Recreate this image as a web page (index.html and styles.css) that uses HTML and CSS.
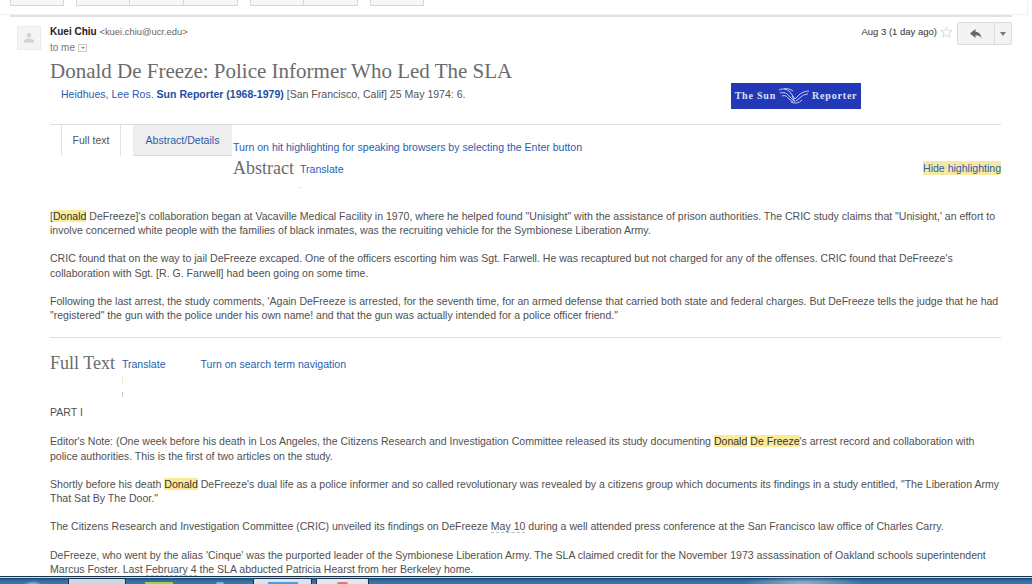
FILE: index.html
```html
<!DOCTYPE html>
<html lang="en">
<head>
<meta charset="utf-8">
<title>Donald De Freeze: Police Informer Who Led The SLA</title>
<link rel="stylesheet" href="styles.css">
</head>
<body>
<div class="screen">
  <div class="topband">
    <div class="toolbar">
      <div class="tb-group"><span class="tb-btn"></span></div>
      <div class="tb-group"><span class="tb-btn"></span><span class="tb-btn"></span><span class="tb-btn"></span></div>
      <div class="tb-group"><span class="tb-btn"></span><span class="tb-btn"></span></div>
      <div class="tb-group"><span class="tb-btn"></span></div>
    </div>
  </div>
  <div class="toprule"></div>

  <header class="mail-head">
    <div class="avatar">
      <svg viewBox="0 0 24 24" width="22" height="22"><circle cx="12" cy="9" r="2.500" fill="#d2d2d2"/><path d="M6.500 17v-1.500c0-2 3-3 5.500-3s5.500 1 5.500 3V17z" fill="#d2d2d2"/></svg>
    </div>
    <div class="sender">
      <div><b class="sender-name">Kuei Chiu</b> <span class="sender-mail">&lt;kuei.chiu@ucr.edu&gt;</span></div>
      <div class="to-me">to me <span class="to-caret"><span class="to-tri"></span></span></div>
    </div>
    <div class="mail-meta">
      <span class="mail-date">Aug 3 (1 day ago)</span>
      <svg class="star" viewBox="0 0 14 14" width="13" height="13"><path d="M7 1l1.800 4h4.200l-3.400 2.800 1.200 4.400L7 9.800l-3.800 2.400 1.200-4.400L1 5h4.200z" fill="none" stroke="#d8d8d8"/></svg>
      <div class="reply-btn">
        <span class="reply-main"><svg viewBox="0 0 12 10" width="12" height="10"><path d="M5.500 0L0 4.500 5.500 9V6.300c2.500 0 4.500.6 6 3C11 5.500 9 3 5.500 2.800z" fill="#666"/></svg></span>
        <span class="reply-more"><span class="caret"></span></span>
      </div>
    </div>
  </header>

  <main class="doc">
    <h1 class="doc-title">Donald De Freeze: Police Informer Who Led The SLA</h1>
    <div class="cite-row">
      <p class="cite"><a>Heidhues, Lee Ros.</a> <a class="bold">Sun Reporter (1968-1979)</a> [San Francisco, Calif] 25 May 1974: 6.</p>
      <div class="logo">
        <span>The Sun</span>
        <svg viewBox="0 0 32 18" width="32" height="18"><g fill="none" stroke="#d8def5" stroke-width=".9"><path d="M1 3c4-2 8-1 11 2l5 7"/><path d="M2 6c4-1 7 0 9 3l5 5"/><path d="M4 9c3-1 5 0 7 3l4 3"/><path d="M6 2c3-1 6 0 9 2"/><path d="M17 12l5-5c3-2 6-3 9-3"/><path d="M18 14l5-4c2-2 5-3 7-3"/><path d="M13 15c4 2 8 1 11-2"/><path d="M14 9l3 6"/></g></svg>
        <span>Reporter</span>
      </div>
    </div>

    <div class="tabs-area">
      <nav class="tabs">
        <span class="tab tab-active">Full text</span>
        <span class="tab tab-other">Abstract/Details</span>
      </nav>
      <div class="tab-side">
        <a class="hit-link">Turn on hit highlighting for speaking browsers by selecting the Enter button</a>
        <div class="abstract-row">
          <h2 class="sec-title">Abstract</h2>
          <a class="translate">Translate<span class="speck speck-a"></span></a>
          <a class="hide-hl">Hide highlighting</a>
        </div>
      </div>
    </div>

    <section class="abstract">
      <p>[<mark>Donald</mark> DeFreeze]'s collaboration began at Vacaville Medical Facility in 1970, where he helped found "Unisight" with the assistance of prison authorities. The CRIC study claims that "Unisight,' an effort to involve concerned white people with the families of black inmates, was the recruiting vehicle for the Symbionese Liberation Army.</p>
      <p>CRIC found that on the way to jail DeFreeze excaped. One of the officers escorting him was Sgt. Farwell. He was recaptured but not charged for any of the offenses. CRIC found that DeFreeze's collaboration with Sgt. [R. G. Farwell] had been going on some time.</p>
      <p>Following the last arrest, the study comments, 'Again DeFreeze is arrested, for the seventh time, for an armed defense that carried both state and federal charges. But DeFreeze tells the judge that he had "registered" the gun with the police under his own name! and that the gun was actually intended for a police officer friend."</p>
    </section>

    <div class="fulltext-head">
      <h2 class="sec-title">Full Text</h2>
      <a class="translate">Translate<span class="speck speck-b"></span><span class="speck speck-c"></span></a>
      <a class="nav-link">Turn on search term navigation</a>
    </div>

    <section class="fulltext">
      <p class="part">PART I</p>
      <p>Editor's Note: (One week before his death in Los Angeles, the Citizens Research and Investigation Committee released its study documenting <mark>Donald</mark> <mark>De Freeze</mark>'s arrest record and collaboration with police authorities. This is the first of two articles on the study.</p>
      <p>Shortly before his death <mark>Donald</mark> DeFreeze's dual life as a police informer and so called revolutionary was revealed by a citizens group which documents its findings in a study entitled, "The Liberation Army That Sat By The Door."</p>
      <p>The Citizens Research and Investigation Committee (CRIC) unveiled its findings on DeFreeze <span class="dashed">May 10</span> during a well attended press conference at the San Francisco law office of Charles Carry.</p>
      <p>DeFreeze, who went by the alias 'Cinque' was the purported leader of the Symbionese Liberation Army. The SLA claimed credit for the November 1973 assassination of Oakland schools superintendent Marcus Foster. Last <span class="dashed">February 4</span> the SLA abducted Patricia Hearst from her Berkeley home.</p>
    </section>
  </main>

  <footer class="taskbar">
    <span class="task-orb"></span>
    <span class="task-btn"></span>
    <span class="task-icon task-green"></span>
    <span class="task-icon task-blue"></span>
    <span class="task-btn task-btn-b"><span class="task-inner"></span></span>
    <span class="task-btn task-btn-c"><span class="task-red"></span></span>
  </footer>
</div>
</body>
</html>
```
FILE: styles.css
```css
* { box-sizing: border-box; }
html, body { margin: 0; padding: 0; }
body { background: #fff; font-family: "Liberation Sans", Arial, sans-serif; font-size: 10.550px; color: #505050; }
a { color: #2a5db0; }
p { margin: 0; }
.screen { width: 1032px; height: 584px; overflow: hidden; display: flex; flex-direction: column; position: relative; }

.topband { flex: none; height: 15px; width: 1028px; border-bottom: 1px solid #f0f0f0; border-right: 1px solid #f0f0f0; padding-left: 10px; }
.toolbar { display: flex; gap: 12px; align-items: flex-start; }
.tb-group { display: flex; }
.tb-btn { width: 54px; height: 6px; background: #f6f6f6; border: 1px solid #d8d8d8; border-top: 0; }
.tb-btn + .tb-btn { border-left: 0; }
.toprule { flex: none; height: 2px; width: 1002px; margin-left: 10px; background: #e2e2e2; }

.mail-head { flex: none; height: 33px; margin-top: 9px; padding-left: 17px; display: flex; }
.avatar { width: 24px; height: 24px; background: #f4f4f4; border: 1px solid #ebebeb; }
.avatar svg { display: block; }
.sender { margin-left: 9px; font-size: 10px; line-height: 15px; color: #777; margin-top: -2px; }
.sender-name { color: #222; }
.sender-mail { font-size: 9.400px; color: #666; }
.to-me { color: #777; font-size: 10px; margin-top: 1px; display: flex; align-items: center; gap: 3px; }
.to-caret { width: 9px; height: 8px; border: 1px solid #ccc; display: flex; align-items: center; justify-content: center; }
.to-tri { width: 0; height: 0; border: 2px solid transparent; border-top: 2px solid #888; border-bottom: 0; }
.mail-meta { margin-left: auto; margin-right: 20px; display: flex; align-items: flex-start; }
.mail-date { font-size: 9.500px; color: #333; line-height: 12px; }
.star { margin: 0 3px 0 3px; }
.reply-btn { display: flex; width: 55px; height: 23px; margin-left: 1px; background: #f3f3f3; border: 1px solid #dcdcdc; border-radius: 2px; margin-top: -4px; }
.reply-main { width: 37px; border-right: 1px solid #dcdcdc; display: flex; align-items: center; justify-content: center; }
.reply-more { flex: 1; display: flex; align-items: center; justify-content: center; }
.caret { width: 0; height: 0; border: 3px solid transparent; border-top: 4px solid #777; border-bottom: 0; }

.doc { flex: 1; padding-left: 50px; width: 1001px; display: flex; flex-direction: column; }
.doc-title { margin: 0; font: 400 21px/24px "Liberation Serif", "Times New Roman", serif; color: #6b6b6b; }
.cite-row { display: flex; height: 34px; }
.cite { margin-left: 11px; line-height: 14px; margin-top: 4px; color: #555; width: 670px; }
.cite a { color: #2a5db0; }
.cite .bold { font-weight: 700; color: #1c4fa0; }
.logo { width: 130px; height: 26px; background: #2338b6; color: #dbe1f6; font: 700 10px/26px "Liberation Serif", serif; display: flex; align-items: center; justify-content: center; gap: 2px; letter-spacing: .8px; white-space: nowrap; }

.tabs-area { border-top: 1px solid #dedede; display: flex; margin-top: 7px; height: 77px; }
.tabs { display: flex; height: 31px; flex: none; padding-left: 11px; }
.tab { display: block; line-height: 30px; height: 31px; color: #555; }
.tab-active { width: 60px; text-align: center; border-left: 1px solid #e2e2e2; border-right: 1px solid #e2e2e2; }
.tab-other { width: 99px; margin-left: 12px; background: #eeeeee; border-bottom: 1px solid #dedede; color: #2a5db0; text-align: center; }
.tab-side { flex: 1; margin-left: 1px; padding-top: 15px; display: flex; flex-direction: column; }
.hit-link { line-height: 14px; }
.abstract-row { display: flex; align-items: flex-start; margin-top: 4px; }
.sec-title { margin: 0; font: 400 18px/21px "Liberation Serif", "Times New Roman", serif; color: #6b6b6b; }
.translate { position: relative; margin-left: 6px; line-height: 14px; margin-top: 4px; }
.hide-hl { margin-left: auto; background: #f7e9a2; line-height: 14px; margin-top: 3px; }
.speck { position: absolute; left: 0; width: 1px; background: #c9b8a8; }
.speck-a { top: 25px; height: 1px; }
.speck-b { top: 18px; height: 8px; background: #fbe3c8; }
.speck-c { top: 35px; height: 5px; background: #e6c4a8; }

mark { background: #fbea9a; color: #333; }
.abstract p, .fulltext p { line-height: 14.200px; margin-bottom: 14px; width: 954px; }
.fulltext p { line-height: 14.300px; }
.fulltext .part { margin-bottom: 15px; }
.abstract { margin-top: 8px; border-bottom: 1px solid #dedede; height: 129px; }
.fulltext-head { display: flex; align-items: flex-start; margin-top: 15px; height: 52px; }
.fulltext-head .translate { margin-left: 7px; }
.nav-link { margin-left: 35px; line-height: 14px; margin-top: 4px; }
.dashed { border-bottom: 1px dashed #bbb; }

.taskbar { position: absolute; left: 0; right: 0; bottom: 0; height: 8px; display: flex; align-items: flex-end; background: radial-gradient(ellipse 60px 6px at 803px 7px, #8fb2cc, transparent), linear-gradient(#1d3550 0, #1d3550 1px, #c9d6e0 1px, #c9d6e0 2px, #1c4f7c 2px, #1c4f7c 3px, #2f6c9c 4px, #3a7aa8 8px); }
.task-orb { width: 68px; height: 3px; position: relative; background: radial-gradient(ellipse 10px 4px at 33px 4px, #b4d0e2, transparent); }
.task-btn { width: 58px; height: 6px; background: #c8d8e4; border: 1px solid #1b2f45; border-bottom: 0; border-radius: 2px 2px 0 0; display: flex; justify-content: center; align-items: flex-end; }
.task-icon { height: 2px; }
.task-green { width: 28px; margin-left: 19px; background: #a8d050; }
.task-blue { width: 8px; margin-left: 43px; height: 2px; background: #7fb6dc; border-radius: 4px 4px 0 0; }
.task-btn-b { margin-left: 29px; width: 59px; background: #d7e4ee; margin-right: 4px; }
.task-inner { width: 30px; height: 2px; background: #4f9ad8; }
.task-btn-c { width: 53px; background: #e0e8ee; }
.task-red { width: 11px; height: 2px; background: #e07a70; border-radius: 5px 5px 0 0; }
```
